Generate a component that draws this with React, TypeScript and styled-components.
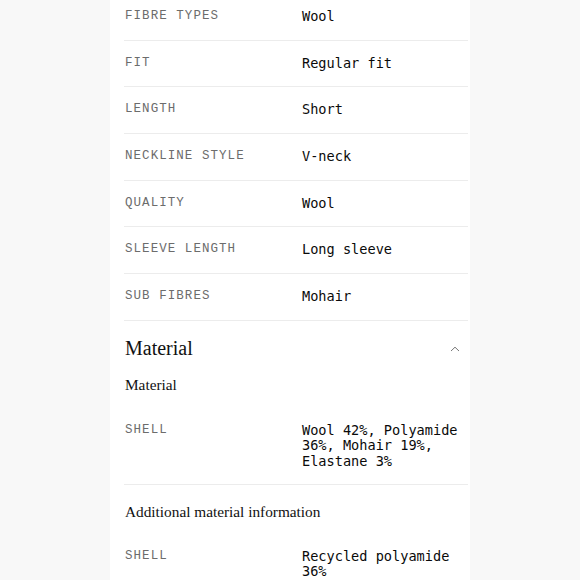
import styled, { createGlobalStyle } from 'styled-components';

const GlobalStyle = createGlobalStyle`
  html, body {
    margin: 0;
    padding: 0;
    background: #f8f8f8;
    overflow: hidden;
  }
`;

const Page = styled.div`
  display: flex;
  justify-content: center;
  height: 580px;
  overflow: hidden;
`;

const Column = styled.div`
  width: 360px;
  background: #ffffff;
  padding: 0 2px 0 14px;
  box-sizing: border-box;
  margin-top: -7px;
`;

const Row = styled.div<{ $plain?: boolean }>`
  display: grid;
  grid-template-columns: 177px 1fr;
  padding: 13px 0 14.67px 1px;
  border-top: ${(p) => (p.$plain ? 'none' : '1px solid #ececec')};
  align-items: start;
`;

const Label = styled.div`
  font-family: 'Liberation Mono', monospace;
  font-size: 12.5px;
  line-height: 18px;
  letter-spacing: 1.05px;
  color: #6c6c6c;
  text-transform: uppercase;
`;

const Value = styled.div`
  font-family: 'DejaVu Sans Mono', monospace;
  font-size: 13.6px;
  line-height: 15.5px;
  padding-top: 2px;
  color: #0a0a0a;
`;

const SectionHead = styled.div`
  display: flex;
  align-items: center;
  justify-content: space-between;
  padding: 8px 8px 0 1px;
  border-top: 1px solid #ececec;
  height: 40px;
`;

const SectionTitle = styled.h2`
  margin: 0;
  font-family: 'Liberation Serif', serif;
  font-weight: 400;
  font-size: 20px;
  color: #111;
`;

const SubTitle = styled.h3<{ $top: number; $bottom: number; $ruled?: boolean }>`
  margin: 0;
  padding: ${(p) => p.$top}px 0 ${(p) => p.$bottom}px 1px;
  border-top: ${(p) => (p.$ruled ? '1px solid #ececec' : 'none')};
  font-family: 'Liberation Serif', serif;
  font-weight: 400;
  font-size: 15.3px;
  line-height: 20px;
  color: #111;
`;

const Chevron = () => (
  <svg width="10" height="6" viewBox="0 0 10 6" fill="none">
    <path d="M1 5L5 1.2L9 5" stroke="#777" strokeWidth="1" />
  </svg>
);

const specs: [string, string][] = [
  ['Fibre types', 'Wool'],
  ['Fit', 'Regular fit'],
  ['Length', 'Short'],
  ['Neckline style', 'V-neck'],
  ['Quality', 'Wool'],
  ['Sleeve length', 'Long sleeve'],
  ['Sub fibres', 'Mohair'],
];

const App = () => (
  <>
    <GlobalStyle />
    <Page>
      <Column>
        {specs.map(([label, value]) => (
          <Row key={label}>
            <Label>{label}</Label>
            <Value>{value}</Value>
          </Row>
        ))}
        <SectionHead>
          <SectionTitle>Material</SectionTitle>
          <Chevron />
        </SectionHead>
        <SubTitle $top={6} $bottom={13}>
          Material
        </SubTitle>
        <Row $plain>
          <Label>Shell</Label>
          <Value>Wool 42%, Polyamide 36%, Mohair 19%, Elastane 3%</Value>
        </Row>
        <SubTitle $top={17} $bottom={12} $ruled>
          Additional material information
        </SubTitle>
        <Row $plain>
          <Label>Shell</Label>
          <Value>Recycled polyamide 36%</Value>
        </Row>
      </Column>
    </Page>
  </>
);

export default App;
